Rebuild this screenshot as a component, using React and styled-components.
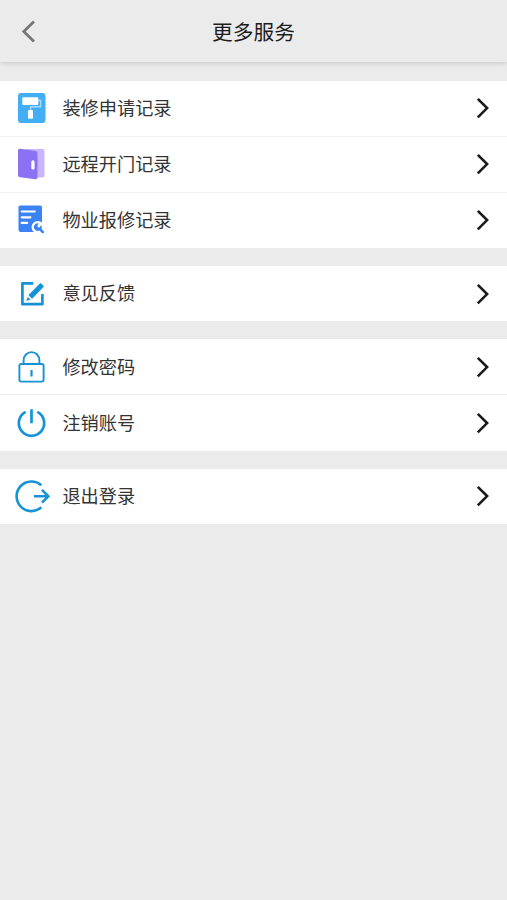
import React from "react";
import styled, { createGlobalStyle } from "styled-components";

const GlobalStyle = createGlobalStyle`
  * { box-sizing: border-box; }
  body {
    margin: 0;
    background: #ebebeb;
    font-family: "Noto Sans CJK SC", sans-serif;
  }
`;

const Screen = styled.main`
  min-height: 900px;
  background: #ebebeb;
`;

const Header = styled.header`
  display: grid;
  grid-template-columns: 62px 1fr 62px;
  align-items: center;
  height: 62px;
  background: #ebebeb;
  box-shadow: 0 1px 5px rgba(0, 0, 0, 0.16);
`;

const BackButton = styled.button`
  display: flex;
  width: 62px;
  height: 62px;
  padding: 0;
  border: 0;
  background: none;
`;

const Title = styled.h1`
  margin: 0;
  font-size: 20.7px;
  line-height: 62px;
  font-weight: 400;
  text-align: center;
  color: #1c1c1c;
`;

const Groups = styled.div`
  display: flex;
  flex-direction: column;
  gap: 18px;
  padding-top: 18.5px;
`;

const Group = styled.section`
  display: flex;
  flex-direction: column;
  gap: 1px;
  background: #f0f0f0;
`;

const Row = styled.div`
  display: flex;
  align-items: center;
  height: 55.2px;
  background: #fff;
`;

const IconCell = styled.span`
  display: flex;
  width: 62px;
  height: 56px;
  flex: none;
`;

const Label = styled.span`
  flex: 1;
  padding: 0 0 1.4px 0.4px;
  font-size: 18.2px;
  line-height: 53px;
  color: #333;
`;

const Chevron = styled.svg`
  flex: none;
  margin-right: 17px;
`;

const blue = "#1593d6";

const Glyph = ({ children }) => (
  <svg width="62" height="56" viewBox="0 0 62 56" fill="none">{children}</svg>
);

const RollerIcon = () => (
  <Glyph>
    <rect x="18" y="13" width="27.5" height="30" rx="3" fill="#43adf6" />
    <path d="M38 20.5h2.6v6.2h-10v4" stroke="#a5dcff" strokeWidth="1.4" />
    <rect x="22.3" y="17.3" width="16" height="7.6" rx="1" fill="#fff" />
    <rect x="28" y="30" width="5" height="8.8" rx="1" fill="#fff" />
  </Glyph>
);

const DoorIcon = () => (
  <Glyph>
    <rect x="24" y="13" width="20.5" height="28.5" rx="2" fill="#c9b5ff" />
    <path d="M20 12.8l15.5 2.3q2 .3 2 2.2v24.2q0 2-2 1.8L20 41.3q-2-.2-2-2V14.6q0-2 2-1.8z" fill="#8b72f4" />
    <rect x="31.3" y="24.3" width="3.3" height="9.2" rx="1.6" fill="#fff" />
  </Glyph>
);

const RepairIcon = () => (
  <Glyph>
    <rect x="18.5" y="13.4" width="23.5" height="26.5" rx="1.8" fill="#3b83f5" />
    <path d="M21.7 19.5h13M21.7 25.3h8.6M21.7 30.9h5.4" stroke="#fff" strokeWidth="2.2" strokeLinecap="round" />
    <circle cx="37.8" cy="35.2" r="6.2" fill="#fff" />
    <path d="M38.8 31.4a4 4 0 0 0-5 3.4 4 4 0 0 0 5.6 3.8l2.6 2.4c1.4 1.1 2.7-.5 1.7-1.7l-2.2-2.5a4 4 0 0 0-.2-3.6l-2.3 2.6-1.9-1.7z" fill="#3b83f5" />
  </Glyph>
);

const EditIcon = () => (
  <Glyph>
    <path d="M33.3 17.4H22.4V38.2h20V28" stroke={blue} strokeWidth="2.7" strokeLinejoin="round" />
    <path d="M29.6 29.2L40.5 18l2.4 2.4-10.8 11.2z" fill={blue} stroke={blue} strokeWidth="1.7" strokeLinejoin="round" />
    <path d="M27.7 31l2.8 2.6-4.2 1.3z" fill={blue} />
  </Glyph>
);

const LockIcon = () => (
  <Glyph>
    <rect x="19.4" y="25" width="24.2" height="17.6" rx="1.8" stroke={blue} strokeWidth="1.9" />
    <path d="M23.6 25v-3.7a7.9 8.2 0 0 1 15.8 0V25" stroke={blue} strokeWidth="1.9" />
    <path d="M31.5 31v6.5" stroke={blue} strokeWidth="2.2" />
  </Glyph>
);

const PowerIcon = () => (
  <Glyph>
    <path d="M25.6 16.9a12.7 12.7 0 1 0 11.8 0M31.5 14.2v14" stroke={blue} strokeWidth="2.7" />
  </Glyph>
);

const LogoutIcon = () => (
  <Glyph>
    <path d="M41.3 17.3a14.8 14.8 0 1 0 0 22" stroke={blue} strokeWidth="2.6" />
    <path d="M34 28.3h14M42 21.9l6.3 6.4-6.3 6.4" stroke={blue} strokeWidth="2.6" />
  </Glyph>
);

const groups = [
  [
    { label: "装修申请记录", Icon: RollerIcon },
    { label: "远程开门记录", Icon: DoorIcon },
    { label: "物业报修记录", Icon: RepairIcon },
  ],
  [{ label: "意见反馈", Icon: EditIcon }],
  [
    { label: "修改密码", Icon: LockIcon },
    { label: "注销账号", Icon: PowerIcon },
  ],
  [{ label: "退出登录", Icon: LogoutIcon }],
];

export default function App() {
  return (
    <Screen>
      <GlobalStyle />
      <Header>
        <BackButton aria-label="返回">
          <svg width="62" height="62" viewBox="0 0 62 62" fill="none">
            <path d="M34 21.6L23.8 31.5 34 41.4" stroke="#777" strokeWidth="2.8" />
          </svg>
        </BackButton>
        <Title>更多服务</Title>
      </Header>
      <Groups>
        {groups.map((rows, index) => (
          <Group key={index}>
            {rows.map(({ label, Icon }) => (
              <Row key={label}>
                <IconCell><Icon /></IconCell>
                <Label>{label}</Label>
                <Chevron width="15" height="22" viewBox="0 0 15 22" fill="none">
                  <path d="M2.8 1.8l9.3 9.3-9.3 9.3" stroke="#1a1a1a" strokeWidth="2.6" />
                </Chevron>
              </Row>
            ))}
          </Group>
        ))}
      </Groups>
    </Screen>
  );
}
